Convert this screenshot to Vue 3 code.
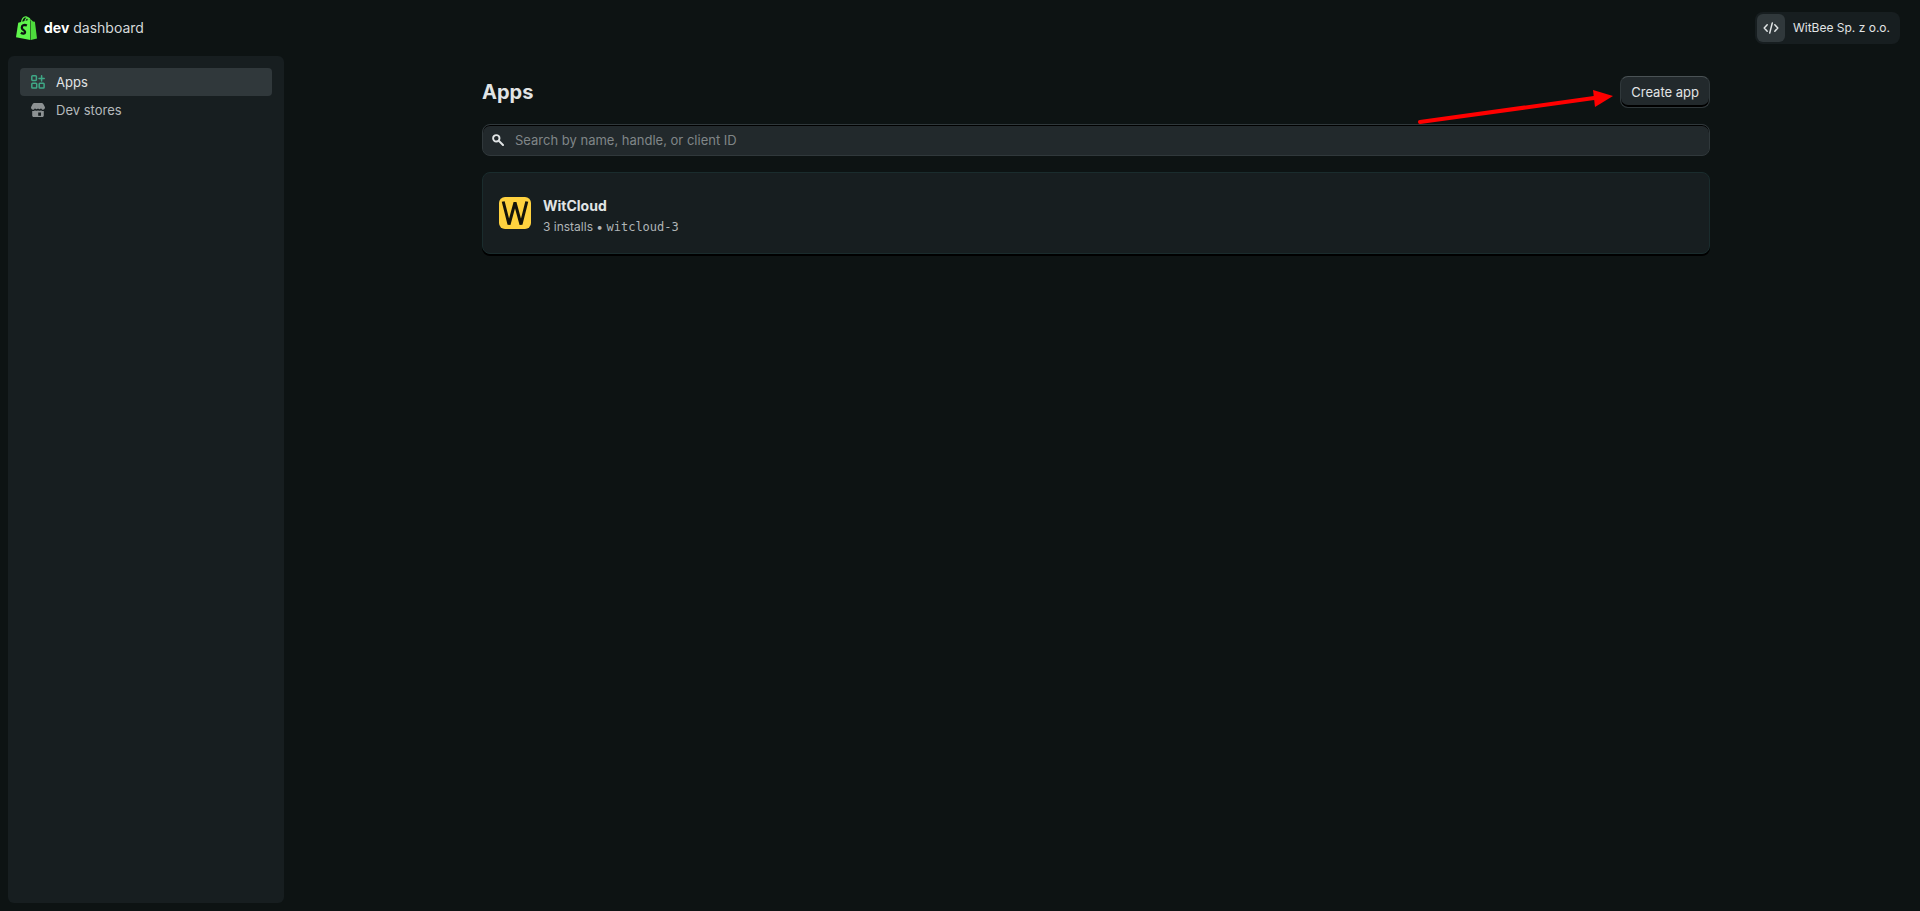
<script setup>
import { ref } from 'vue'

const query = ref('')
const apps = [{ name: 'WitCloud', installs: '3 installs', handle: 'witcloud-3' }]
</script>

<template>
  <div class="page">
    <header class="topbar">
      <a class="brand" href="#">
        <svg class="bag" viewBox="0 0 21 24" aria-hidden="true">
          <path d="M2.2 6.7 14.4 3.5 14.4 24 0 21.3Z" fill="#5ff64c" />
          <path d="M14.9 3.6 17 5.4 18.9 5.7 21 22.5 14.9 24Z" fill="#4ddb3c" />
          <path d="M5.5 7C5.8 3.5 7.6.9 9.7.9c1.8 0 2.7 1.8 2.8 4.4M8.8 5.8C9.4 3 10.7 1.5 12.2 1.8c1.2.3 1.8 1.3 2 2.7" fill="none" stroke="#5ff64c" stroke-width="1.2" />
          <path d="M10.9 9.5c-3-1.3-5.1.1-5.1 2.2 0 2.3 3.3 2.5 3.3 4.4 0 2-2.3 2-4.2.7" fill="none" stroke="#0d1313" stroke-width="2.3" />
        </svg>
        <span><b>dev</b> dashboard</span>
      </a>
      <button class="account" type="button">
        <span class="avatar">
          <svg width="16" height="16" viewBox="0 0 16 16" fill="none" stroke="#e1e5e6" stroke-width="1.5" stroke-linecap="round" stroke-linejoin="round" aria-hidden="true">
            <path d="M4.2 4.8 1.2 8l3 3.2M11.8 4.8l3 3.2-3 3.2M9.3 2.9 6.7 13.1" />
          </svg>
        </span>
        <span>WitBee Sp. z o.o.</span>
      </button>
    </header>

    <div class="body">
      <nav class="sidebar">
        <a class="item active" href="#">
          <svg width="14" height="14" viewBox="0 0 14 14" fill="none" stroke="#3fa886" stroke-width="1.5" aria-hidden="true">
            <rect x=".8" y=".8" width="4.6" height="4.6" rx=".8" />
            <rect x=".8" y="8.2" width="4.9" height="4.9" rx=".8" />
            <rect x="8.2" y="8.2" width="4.9" height="4.9" rx=".8" />
            <path d="M10.6.8v5.2M8 3.4h5.2" stroke-linecap="round" />
          </svg>
          <span>Apps</span>
        </a>
        <a class="item" href="#">
          <svg width="14" height="14" viewBox="0 0 14 14" fill="#8d9293" aria-hidden="true">
            <path d="M4 0h6c1.200 0 2 .4 2.600 1.500L14 4.300c0 1.500-.9 2.400-2 2.400-.9 0-1.600-.6-2-1.500-.7 1.200-1.800 1.500-3 .3-1.200 1.200-2.300.9-3-.3-.4.900-1.100 1.500-2 1.500-1.100 0-2-.9-2-2.400l1.400-2.800C2 .4 2.800 0 4 0Z" />
            <path d="M1.200 8c1.100.2 2-.1 2.800-.8 1 .8 2.100.8 3 0 .9.8 2 .8 3 0 .8.7 1.700 1 2.800.8v4.500c0 .9-.6 1.500-1.500 1.500H2.700c-.9 0-1.500-.6-1.500-1.500Z" />
            <path d="M7.200 9.500h2.800v3.300H7.200Z" fill="#171e20" />
          </svg>
          <span>Dev stores</span>
        </a>
      </nav>

      <main class="main">
        <div class="content">
          <div class="heading">
            <h1>Apps</h1>
            <button class="create" type="button">Create app</button>
            <svg class="arrow" width="196" height="36" viewBox="0 0 196 36" aria-hidden="true">
              <path d="M3 32 177 8" stroke="#f00" stroke-width="4" stroke-linecap="round" />
              <path d="M176 0 196 6 178 17Z" fill="#f00" />
            </svg>
          </div>

          <label class="search">
            <svg width="12" height="12" viewBox="0 0 12 12" fill="none" stroke="#e1e4e5" stroke-width="2" stroke-linecap="round" aria-hidden="true">
              <circle cx="4.300" cy="4.300" r="3.200" stroke-width="1.900" />
              <path d="m7 7 4 4" />
            </svg>
            <input v-model="query" type="text" placeholder="Search by name, handle, or client ID" aria-label="Search apps" />
          </label>

          <a v-for="app in apps" :key="app.handle" class="card" href="#">
            <svg class="logo" width="32" height="32" viewBox="0 0 32 32" aria-hidden="true">
              <rect width="32" height="32" rx="6" fill="#ffd23f" />
              <path d="M4.200 4.500 10 27.500 16 5.500 22 27.500 27.800 4.500" fill="none" stroke="#15140b" stroke-width="3" stroke-linejoin="bevel" />
            </svg>
            <span class="info">
              <strong>{{ app.name }}</strong>
              <span class="meta">{{ app.installs }} • <code>{{ app.handle }}</code></span>
            </span>
          </a>
        </div>
      </main>
    </div>
  </div>
</template>

<style>
body {
  margin: 0;
  background: #0d1313;
}
</style>

<style scoped>
.page {
  box-sizing: border-box;
  min-height: 100vh;
  display: flex;
  flex-direction: column;
  padding: 0 8px 8px;
  background: #0d1313;
  color: #e1e4e5;
  font-family: Inter, "Liberation Sans", sans-serif;
  font-size: 13px;
  line-height: 20px;
}
a {
  color: inherit;
  text-decoration: none;
}
button,
input {
  font: inherit;
  color: inherit;
}
.topbar {
  height: 56px;
  display: flex;
  align-items: center;
  justify-content: space-between;
  padding: 0 12px 0 8px;
}
.brand {
  display: flex;
  align-items: center;
  gap: 7px;
  font-size: 14px;
  color: #d5d9da;
}
.brand b {
  color: #fff;
  font-weight: 700;
}
.bag {
  width: 21px;
  height: 24px;
}
.account {
  display: flex;
  align-items: center;
  gap: 8px;
  height: 32px;
  padding: 0 10px 0 2px;
  border: 0;
  border-radius: 8px;
  background: #171e20;
  font-size: 12px;
}
.avatar {
  display: flex;
  align-items: center;
  justify-content: center;
  width: 28px;
  height: 28px;
  border-radius: 6px;
  background: #30383b;
}
.body {
  flex: 1;
  display: flex;
}
.sidebar {
  box-sizing: border-box;
  width: 276px;
  flex: none;
  padding: 12px;
  border-radius: 6px;
  background: #171e20;
}
.item {
  display: flex;
  align-items: center;
  gap: 11px;
  height: 28px;
  padding: 0 11px;
  border-radius: 4px;
  color: #b5babc;
}
.item.active {
  background: #30383b;
  color: #e1e4e5;
}
.main {
  flex: 1;
  padding: 20px 20px 0 16px;
}
.content {
  max-width: 1228px;
  margin: 0 auto;
  display: flex;
  flex-direction: column;
  gap: 16px;
}
.heading {
  position: relative;
  display: flex;
  align-items: center;
  justify-content: space-between;
}
h1 {
  margin: 0;
  font-size: 20px;
  line-height: 24px;
  font-weight: 700;
}
.create {
  height: 32px;
  padding: 0 10px;
  border: 1px solid #30383b;
  border-top-color: #4a5255;
  border-radius: 8px;
  background: #22292c;
  box-shadow: inset 0 -2px 0 #000;
}
.arrow {
  position: absolute;
  right: 97px;
  top: 14px;
  overflow: visible;
}
.search {
  box-sizing: border-box;
  display: flex;
  align-items: center;
  gap: 11px;
  height: 32px;
  padding: 0 9px;
  border: 1px solid #30383b;
  border-radius: 8px;
  background: #22292c;
  box-shadow: inset 0 1px 0 #000;
}
.search input {
  flex: 1;
  min-width: 0;
  padding: 0;
  border: 0;
  outline: 0;
  background: transparent;
}
.search input::placeholder {
  color: #808688;
  opacity: 1;
}
.card {
  display: flex;
  align-items: center;
  gap: 12px;
  padding: 16px;
  border: 1px solid #1a2c2d;
  border-radius: 8px;
  background: #171e20;
  box-shadow: 0 2px 0 #000;
}
.info {
  display: flex;
  flex-direction: column;
  gap: 1px;
  padding-top: 7px;
}
.info strong {
  font-size: 14px;
  font-weight: 700;
}
.meta {
  font-size: 12px;
  color: #b0b5b7;
}
.meta code {
  font-family: "DejaVu Sans Mono", monospace;
  font-size: 12px;
}
</style>
